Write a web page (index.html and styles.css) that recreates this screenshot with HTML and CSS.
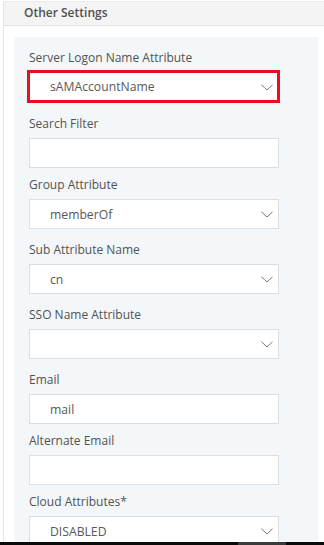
FILE: index.html
```html
<!DOCTYPE html>
<html>
<head>
<meta charset="utf-8">
<link rel="stylesheet" href="styles.css">
</head>
<body>
<div class="page">
  <div class="section">
    <div class="section-head">Other Settings</div>
    <div class="panel">
      <div class="field">
        <div class="label">Server Logon Name Attribute</div>
        <div class="select highlight"><span class="value">sAMAccountName</span><svg class="chev" viewBox="0 0 12 7" width="12" height="7"><path d="M0.5 0.8 L6 6 L11.5 0.8" fill="none" stroke="#6a6a6a" stroke-width="0.9"/></svg></div>
      </div>
      <div class="field input-field">
        <div class="label">Search Filter</div>
        <div class="input"></div>
      </div>
      <div class="field">
        <div class="label">Group Attribute</div>
        <div class="select"><span class="value">memberOf</span><svg class="chev" viewBox="0 0 12 7" width="12" height="7"><path d="M0.5 0.8 L6 6 L11.5 0.8" fill="none" stroke="#6a6a6a" stroke-width="0.9"/></svg></div>
      </div>
      <div class="field">
        <div class="label">Sub Attribute Name</div>
        <div class="select"><span class="value">cn</span><svg class="chev" viewBox="0 0 12 7" width="12" height="7"><path d="M0.5 0.8 L6 6 L11.5 0.8" fill="none" stroke="#6a6a6a" stroke-width="0.9"/></svg></div>
      </div>
      <div class="field">
        <div class="label">SSO Name Attribute</div>
        <div class="select"><span class="value"></span><svg class="chev" viewBox="0 0 12 7" width="12" height="7"><path d="M0.5 0.8 L6 6 L11.5 0.8" fill="none" stroke="#6a6a6a" stroke-width="0.9"/></svg></div>
      </div>
      <div class="field input-field">
        <div class="label">Email</div>
        <div class="input"><span class="value">mail</span></div>
      </div>
      <div class="field input-field">
        <div class="label">Alternate Email</div>
        <div class="input"></div>
      </div>
      <div class="field">
        <div class="label">Cloud Attributes*</div>
        <div class="select"><span class="value">DISABLED</span><svg class="chev" viewBox="0 0 12 7" width="12" height="7"><path d="M0.5 0.8 L6 6 L11.5 0.8" fill="none" stroke="#6a6a6a" stroke-width="0.9"/></svg></div>
      </div>
    </div>
  </div>
  <div class="bottom-bar"><div class="thumb"></div></div>
</div>
</body>
</html>
```

FILE: styles.css
```css
* { box-sizing: border-box; }
html, body {
  margin: 0;
  padding: 0;
  background: #ffffff;
  font-family: "Open Sans", "Noto Sans", sans-serif;
  color: #4f4f4f;
}
.page {
  width: 324px;
  height: 545px;
  display: flex;
  flex-direction: column;
  overflow: hidden;
}
.section {
  flex: 1;
  margin-left: 3px;
  margin-top: 1px;
  border-left: 1px solid #e6e6e6;
  border-top: 1px solid #ececec;
  display: flex;
  flex-direction: column;
  overflow: hidden;
}
.section-head {
  height: 24px;
  flex: none;
  background: #f4f4f4;
  border-bottom: 1px solid #e2e2e2;
  padding-left: 20px;
  font-size: 12px;
  font-weight: 600;
  line-height: 21px;
  color: #505050;
}
.panel {
  flex: 1;
  margin: 11px 6px 0 10px;
  background: #f4f7f9;
  padding: 13px 0 0 12px;
  display: flex;
  flex-direction: column;
}
.field {
  display: flex;
  flex-direction: column;
  margin-bottom: 13px;
}
.field.input-field { margin-bottom: 9px; }
.label {
  font-size: 12px;
  line-height: 16px;
  height: 16px;
  color: #525252;
  margin-bottom: 6px;
  margin-left: 3px;
  white-space: nowrap;
}
.select, .input {
  width: 250px;
  height: 30px;
  margin-left: 3px;
  background: #ffffff;
  border: 1px solid #dcdfe2;
  display: flex;
  align-items: center;
  padding-left: 20px;
  padding-right: 5px;
  font-size: 12.2px;
  color: #585858;
}
.select .value, .input .value { flex: 1; }
.chev { flex: none; margin-top: 1px; }
.select.highlight {
  width: 253px;
  height: 33px;
  margin-left: 1px;
  border: 3px solid #e8111b;
  padding-left: 20px;
  padding-right: 4px;
  margin-top: -2px;
}
.bottom-bar {
  height: 3px;
  flex: none;
  background: #0a0a0a;
  position: relative;
}
.thumb {
  position: absolute;
  left: 238px;
  top: 0;
  width: 48px;
  height: 3px;
  background: #3a3a3a;
}
```
